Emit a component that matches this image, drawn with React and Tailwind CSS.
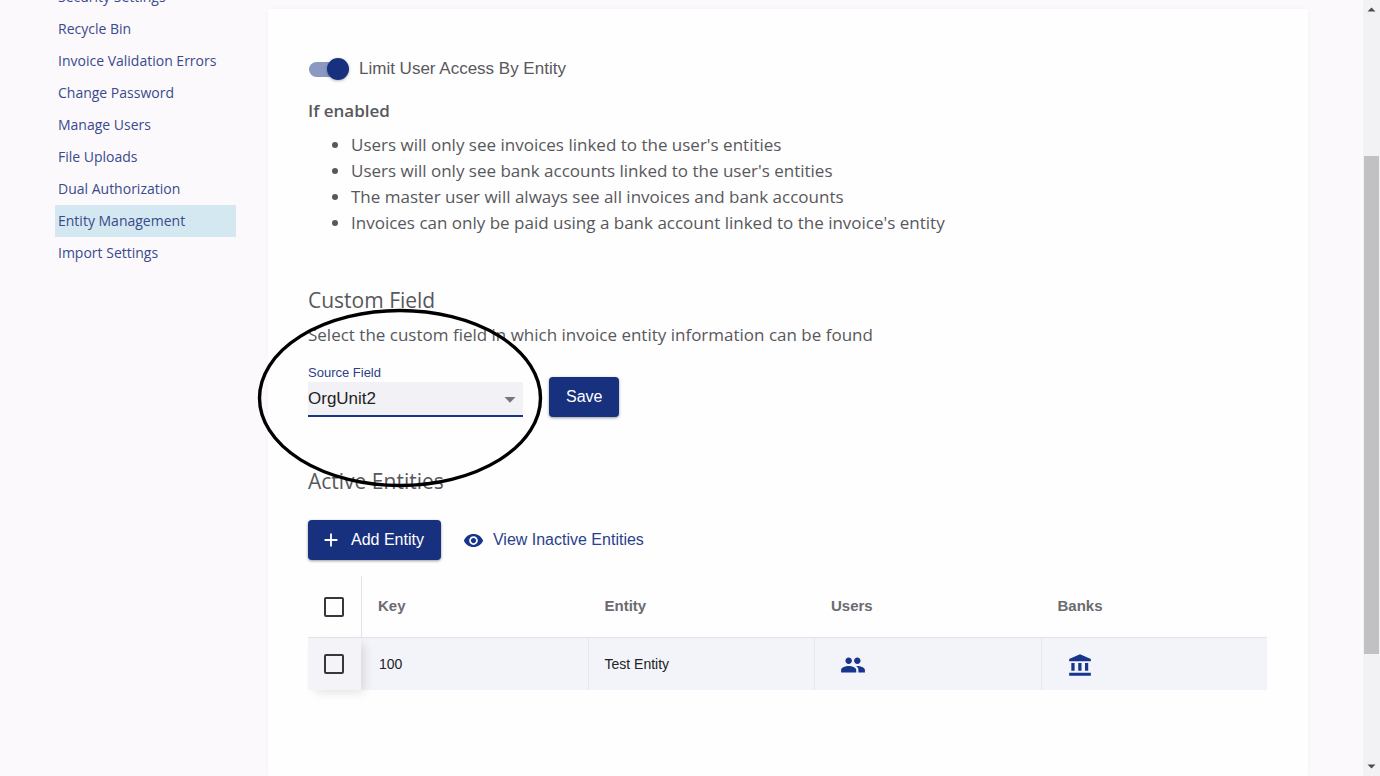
import React from "react";
import { MdAdd, MdPeople, MdVisibility } from "react-icons/md";

const navItems = [
  "Security Settings",
  "Recycle Bin",
  "Invoice Validation Errors",
  "Change Password",
  "Manage Users",
  "File Uploads",
  "Dual Authorization",
  "Entity Management",
  "Import Settings",
];

const rules = [
  "Users will only see invoices linked to the user's entities",
  "Users will only see bank accounts linked to the user's entities",
  "The master user will always see all invoices and bank accounts",
  "Invoices can only be paid using a bank account linked to the invoice's entity",
];

const rows = [{ key: "100", entity: "Test Entity" }];

function SideNav() {
  return (
    <nav aria-label="Settings" className="-mt-[19px] w-[181px] shrink-0">
      <ul>
        {navItems.map((item) => (
          <li key={item}>
            <a
              href="#"
              aria-current={item === "Entity Management" ? "page" : undefined}
              className="block whitespace-nowrap px-[3px] text-[14px] leading-8 text-[#3a4a8c] aria-[current=page]:bg-[#d3e8f1]"
            >
              {item}
            </a>
          </li>
        ))}
      </ul>
    </nav>
  );
}

function BankIcon() {
  return (
    <svg viewBox="0 0 24 24" className="size-[26px]" fill="currentColor" aria-hidden="true">
      <path d="M4 10.2h3v7.2H4zM10.4 10.2h3v7.2h-3zM2 19.2h20V22H2zM16.6 10.2h3v7.2h-3zM12 2 2 6.5v2h20v-2z" />
    </svg>
  );
}

function Check({ label }) {
  return (
    <input
      type="checkbox"
      aria-label={label}
      className="mx-auto block size-5 appearance-none rounded-[2px] border-2 border-[#37373b] bg-transparent checked:bg-[#17317f]"
    />
  );
}

function EntityTable() {
  const head = "text-left text-[15px] font-bold text-[#6b6b6f]";
  const cell = "border-l border-[#e6e6ee]";
  return (
    <table className="mt-4 w-full table-fixed border-separate border-spacing-0 font-['Liberation_Sans',sans-serif]">
      <colgroup>
        <col className="w-[53px]" />
        <col />
        <col />
        <col />
        <col />
      </colgroup>
      <thead>
        <tr className="h-[62px] *:border-b *:border-[#e2e2e8]">
          <th className="pr-px">
            <Check label="Select all entities" />
          </th>
          <th className={`border-l px-4 ${head}`}>Key</th>
          <th className={`px-[17px] ${head}`}>Entity</th>
          <th className={`px-[17px] ${head}`}>Users</th>
          <th className={`px-[17px] ${head}`}>Banks</th>
        </tr>
      </thead>
      <tbody>
        {rows.map((row) => (
          <tr key={row.key} className="h-[52px] bg-[#f3f4fa] text-[14px] text-[#222]">
            <td className="relative bg-[#f3f3f8] pr-px shadow-[5px_4px_10px_-2px_rgba(0,0,0,0.12)]">
              <Check label={`Select entity ${row.key}`} />
            </td>
            <td className="px-[18px]">{row.key}</td>
            <td className={`px-4 ${cell}`}>{row.entity}</td>
            <td className={`px-[25px] pt-0.5 ${cell}`}>
              <button type="button" aria-label="Users" className="block text-[#17358a]">
                <MdPeople size={26} />
              </button>
            </td>
            <td className={`px-[25px] pt-0.5 ${cell}`}>
              <button type="button" aria-label="Banks" className="block text-[#17358a]">
                <BankIcon />
              </button>
            </td>
          </tr>
        ))}
      </tbody>
    </table>
  );
}

function ScrollRail() {
  return (
    <div aria-hidden="true" className="flex w-[17px] shrink-0 flex-col items-center bg-[#f2f1f3]">
      <svg viewBox="0 0 17 17" className="size-[17px]" fill="#4d4d50">
        <path d="M4.5 11.5h8L8.5 7.5z" />
      </svg>
      <div className="grow-139" />
      <div className="w-[15px] grow-498 bg-[#c1c0c3]" />
      <div className="grow-105" />
      <svg viewBox="0 0 17 17" className="size-[17px]" fill="#4d4d50">
        <path d="M4.5 5.5h8L8.5 9.5z" />
      </svg>
    </div>
  );
}

export default function App() {
  const button =
    "flex items-center rounded bg-[#17317f] text-white shadow-[0_1px_3px_rgba(0,0,0,0.4)]";
  return (
    <div className="flex h-screen overflow-hidden bg-[#fbf9fc] font-['Open_Sans',sans-serif] text-[#58585c]">
      <div className="flex min-w-0 grow gap-8 px-[55px]">
        <SideNav />
        <main className="mt-[9px] min-w-0 grow bg-[#fefefe] pl-10 pr-[41px] pt-12 shadow-[0_0_4px_rgba(120,100,140,0.04)]">
          <label className="flex h-6 items-center gap-[14px] pl-px font-['Liberation_Sans',sans-serif] text-[17px]">
            <input
              type="checkbox"
              role="switch"
              defaultChecked
              className="relative h-[15px] w-9 appearance-none rounded-full bg-[#8b98c2] before:absolute before:-top-1 before:left-[18px] before:size-[22px] before:rounded-full before:bg-[#17317f] before:shadow-[0_1px_3px_rgba(0,0,0,0.3)]"
            />
            Limit User Access By Entity
          </label>
          <h3 className="mt-[17px] text-[17px] font-semibold leading-[26px]">If enabled</h3>
          <ul className="mt-2 list-disc pl-[43px] text-[17px] leading-[26px]">
            {rules.map((rule) => (
              <li key={rule}>{rule}</li>
            ))}
          </ul>

          <h2 className="mt-12 text-[21px] leading-8">Custom Field</h2>
          <p className="mt-1.5 text-[17px] leading-[26px]">
            Select the custom field in which invoice entity information can be found
          </p>
          <div className="relative mt-4 flex items-end gap-[26px] font-['Liberation_Sans',sans-serif]">
            <div className="w-[215px]">
              <label htmlFor="source-field" className="block text-[13px] leading-[18px] text-[#2b3f8c]">
                Source Field
              </label>
              <div className="relative">
                <select
                  id="source-field"
                  className="block h-[35px] w-full appearance-none border-b-2 border-[#17358a] bg-[#f2f1f5] text-[17px] text-[#222]"
                >
                  <option>OrgUnit2</option>
                </select>
                <svg
                  viewBox="0 0 12 6"
                  className="pointer-events-none absolute right-[7px] top-[15px] h-[6px] w-3"
                  fill="#77777b"
                  aria-hidden="true"
                >
                  <path d="M0.5 0h11L6 5.7z" />
                </svg>
              </div>
            </div>
            <button type="button" className={`h-10 px-[17px] text-base ${button}`}>
              Save
            </button>
            <svg
              viewBox="0 0 286 180"
              className="pointer-events-none absolute -left-[51px] -top-14 h-[180px] w-[286px]"
              fill="none"
              stroke="#000"
              strokeWidth="3.4"
              aria-hidden="true"
            >
              <ellipse cx="143" cy="90" rx="140.5" ry="87.5" />
            </svg>
          </div>

          <h2 className="mt-12 text-[21px] leading-8">Active Entities</h2>
          <div className="mt-[23px] flex items-center gap-[22px] font-['Liberation_Sans',sans-serif] text-base">
            <button type="button" className={`h-10 gap-[9px] pl-3 pr-[17px] ${button}`}>
              <MdAdd size={22} />
              Add Entity
            </button>
            <button type="button" className="flex items-center gap-[9px] text-[#2b3f8c]">
              <MdVisibility size={21} className="text-[#17358a]" />
              View Inactive Entities
            </button>
          </div>
          <EntityTable />
        </main>
      </div>
      <ScrollRail />
    </div>
  );
}
